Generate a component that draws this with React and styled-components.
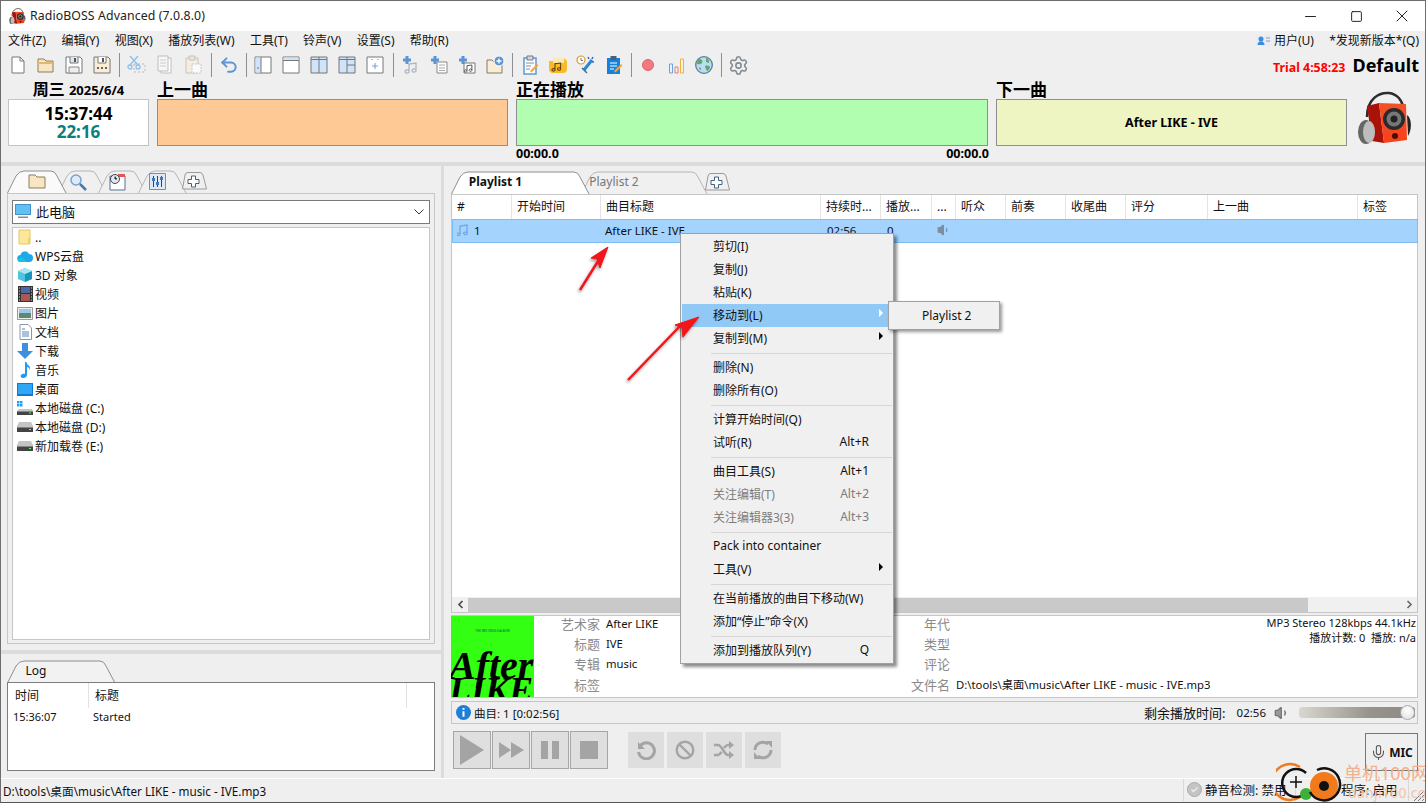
import React from 'react'
import styled, { createGlobalStyle } from 'styled-components'
import { Settings, Undo2, Volume1, Minus, Square, X, Mic } from 'lucide-react'

const Global = createGlobalStyle`
html, body { margin:0; padding:0; background:#efefef; }
body { font-family:"Noto Sans","Noto Sans CJK SC",sans-serif; font-size:12px; color:#111; }
* { box-sizing:border-box; }
`

const Window = styled.div`
position:relative; width:1426px; height:803px; overflow:hidden;
border:1px solid #6e6e6e; border-bottom-color:#555;
display:flex; flex-direction:column; background:#efefef;
`
const TitleBar = styled.div`
height:30px; background:#fff; display:flex; align-items:center; padding-left:8px; flex:none;
`
const TitleText = styled.span`margin:0 0 2px 4px; font-size:12.3px; color:#222; letter-spacing:.1px;`
const WinButtons = styled.div`
margin-left:auto; display:flex; align-items:center; color:#222;
span { width:46px; height:30px; display:flex; align-items:center; justify-content:center; }
`
const MenuBar = styled.div`
height:21px; display:flex; align-items:center; gap:15.3px; padding:0 6px 3px 7px; flex:none;
`
const MenuName = styled.span`white-space:nowrap; ${p => p.$right && 'margin-left:auto;'} display:flex; align-items:center; gap:3px;`
const ToolRow = styled.div`height:28px; display:flex; align-items:center; padding:0 0 2px 3px; flex:none;`
const ToolBtn = styled.div`width:28px; height:26px; display:flex; align-items:center; justify-content:center;`
const ToolSep = styled.div`
width:${p => p.$w || 7}px; height:24px; display:flex; justify-content:center;
&::before { content:""; width:1px; background:#8f8f8f; }
`
const Trial = styled.span`margin-left:auto; color:#f00; font-weight:700; font-size:12.4px; margin-top:5px;`
const DefaultName = styled.span`margin:0 6px 0 7px; font-weight:700; font-size:18px; color:#000; line-height:24px;`
const Header = styled.div`height:82px; display:flex; padding-left:7px; flex:none;`
const Slot = styled.div`width:${p => p.$w}px; margin-right:8px; display:flex; flex-direction:column;`
const SlotTitle = styled.div`
height:19px; font-size:17px; font-weight:700; line-height:19px; color:#000; white-space:nowrap;
${p => p.$center && 'text-align:center; font-size:16px;'}
small { font-size:13px; font-weight:700; }
`
const ClockBox = styled.div`
height:47px; background:#fff; border:1px solid #c4c4c4; display:flex; flex-direction:column; align-items:center; justify-content:center;
`
const ClockMain = styled.div`font-weight:700; font-size:17px; line-height:18px; color:#000;`
const ClockSub = styled.div`font-weight:700; font-size:17px; line-height:18px; color:#0a8080;`
const TrackBox = styled.div`
height:47px; background:${p => p.$bg}; border:1px solid #8f8f8f; display:flex; align-items:center; justify-content:center;
font-weight:700; font-size:12.5px; color:#000;
`
const Times = styled.div`display:flex; justify-content:space-between; font-weight:700; font-size:12.5px; line-height:15px; color:#000; margin-right:-1px;`
const LogoSlot = styled.div`margin:11px 0 0 2px;`
const HSplit = styled.div`height:4px; background:#dcdcdc; flex:none;`
const Main = styled.div`flex:1; display:flex; min-height:0;`
const LeftCol = styled.div`width:440px; display:flex; flex-direction:column; flex:none;`
const VSplit = styled.div`width:3px; background:#dcdcdc; flex:none;`
const RightCol = styled.div`flex:1; padding:5px 7px 0; display:flex; flex-direction:column; min-width:0;`
const LeftTop = styled.div`height:484px; padding:4px 6px 6px; display:flex; flex-direction:column; flex:none;`
const LeftBottom = styled.div`flex:1; padding:6px 6px 7px; display:flex; flex-direction:column; min-height:0;`
const TabStrip = styled.div`display:flex; height:23px; flex:none; position:relative; z-index:1;`
const TabWrap = styled.div`
position:relative; width:${p => p.$w}px; height:${p => p.$small ? 18 : 23}px;
margin-left:${p => p.$over || 0}px; margin-top:${p => p.$small ? 2 : 0}px; z-index:${p => p.$active ? 2 : 1};
display:flex; align-items:center; justify-content:center; padding-right:${p => p.$pad || 0}px;
padding-bottom:${p => p.$text ? 2 : 0}px;
font-weight:${p => p.$bold ? 700 : 400}; color:${p => p.$dim ? '#777' : '#111'};
svg.shape { position:absolute; left:0; top:0; }
> span, > svg:not(.shape) { position:relative; }
`
const TabBody = styled.div`
flex:1; border:1px solid #c6c6c6; padding:6px 4px 3px; display:flex; flex-direction:column; min-height:0;
`
const Combo = styled.div`
height:24px; background:#fff; border:1px solid #7a7a7a; display:flex; align-items:center; padding:0 5px 1px 2px; gap:5px; flex:none; font-size:13px;
`
const ComboArrow = styled.svg`margin-left:auto;`
const FileList = styled.div`
flex:1; margin-top:3px; background:#fff; border:1px solid #c6c6c6;
`
const FileRow = styled.div`height:19px; display:flex; align-items:center; gap:2px; padding:0 0 1px 4px; white-space:nowrap;`
const FileIcon = styled.span`width:16px; height:16px; display:flex; align-items:center; justify-content:center; flex:none;`
const LogBox = styled.div`flex:1; background:#fff; border:1px solid #7d7d7d; margin-top:-1px; position:relative; z-index:1;`
const LogHead = styled.div`display:grid; grid-template-columns:81px 318px 1fr; height:25px;`
const LogHeadCell = styled.div`
display:flex; align-items:center; padding:0 0 2px 7px; font-size:12px;
&:not(:last-child) { border-right:1px solid #e2e2e2; }
&:nth-child(2) { padding-left:6px; }
`
const LogRow = styled.div`display:grid; grid-template-columns:80px 1fr; height:17px; align-items:center; font-size:11px; padding-left:5px;`

const Table = styled.div`
height:${p => p.$h}px; background:#fff; border:1px solid #c6c6c6; position:relative; flex:none; display:flex; flex-direction:column;
`
const HeadRow = styled.div`display:flex; height:24px; flex:none;`
const HeadCell = styled.div`
width:${p => p.$w}px; flex:none; padding:0 0 2px 5px; display:flex; align-items:center; white-space:nowrap; overflow:hidden;
border-right:1px solid #e4e4e4; &:last-child { border-right:none; }
`
const TrackRow = styled.div`
display:flex; height:24px; background:#a4d3fd; border:1px solid #7cbdf6; flex:none; margin:0 -1px 0 0; padding-bottom:2px; align-items:center; font-size:11.5px;
`
const TrackCell = styled.div`width:${p => p.$w}px; flex:none; padding-left:${p => p.$pad ?? 5}px; display:flex; align-items:center; white-space:nowrap;`
const TrackNum = styled.svg`margin-right:5px;`
const TableFill = styled.div`flex:1;`
const HScroll = styled.div`height:15px; display:flex; align-items:center; background:#f0f0f0; flex:none;`
const ScrollArrow = styled.div`width:16px; height:15px; display:flex; align-items:center; justify-content:center; flex:none; ${p => p.$end && 'margin-left:auto;'}`
const ScrollThumb = styled.div`width:${p => p.$w}px; height:14px; background:#c9c9c9;`
const InfoPanel = styled.div`
height:83px; margin-top:2px; background:#fff; border:1px solid #c6c6c6; border-left:none; display:flex; flex:none; overflow:hidden;
`
const Art = styled.div`
width:83px; flex:none; background:#33ff12; position:relative; overflow:hidden; color:#000;
font-family:"Liberation Serif",serif; font-style:italic; font-weight:700; line-height:.7;
`
const ArtTitle = styled.div`position:absolute; left:-2px; top:${p => p.$top}px; font-size:${p => p.$size}px; white-space:nowrap;`
const ArtSmall = styled.div`position:absolute; left:0; right:0; top:13px; text-align:center; font:3px "Noto Sans",sans-serif; color:#156;`
const MetaCol = styled.div`width:${p => p.$w}px; flex:${p => p.$grow ? 1 : 'none'}; margin-top:-3px;`
const MetaRow = styled.div`height:20.4px; display:flex; align-items:center; white-space:nowrap;`
const MetaLabel = styled.span`width:${p => p.$w}px; text-align:right; color:#8a8a8a; font-size:13px; flex:none;`
const MetaValue = styled.span`margin-left:6px; font-size:11.3px;`
const TechInfo = styled.div`width:170px; margin-top:-1px; padding-right:1px; text-align:right; font-size:11px; line-height:15px; white-space:nowrap; flex:none;`
const StatusRow = styled.div`
height:23px; margin-top:3px; border:1px solid #c6c6c6; display:flex; align-items:center; padding:0 2px 0 4px; flex:none; font-size:11.5px;
`
const InfoIcon = styled.svg`margin-right:3px;`
const RemainLabel = styled.span`margin-left:auto; font-size:13px;`
const RemainTime = styled.span`margin:0 8px 0 11px;`
const VolTrack = styled.div`
position:relative; width:116px; height:11px; margin-left:9px; border-radius:3px;
background:linear-gradient(90deg,#dad7d0,#97948c 60%,#8c8a84);
`
const VolKnob = styled.div`
position:absolute; right:0; top:-2px; width:15px; height:15px; border-radius:50%;
background:radial-gradient(circle at 50% 35%,#fff,#ddd); border:1px solid #aaa;
`
const Controls = styled.div`display:flex; align-items:flex-start; margin-top:7px; padding-left:2px; flex:1; position:relative;`
const PlayBtn = styled.div`
width:38px; height:38px; margin-right:1px; background:#dfdfdf; border:1px solid #a6a6a6; display:flex; align-items:center; justify-content:center;
`
const ModeBtn = styled.div`
width:36px; height:36px; margin-right:3px; margin-top:1px; background:#dedede; display:flex; align-items:center; justify-content:center;
`
const Spacer = styled.div`width:${p => p.$w}px; flex:none;`
const MicBtn = styled.div`
margin-left:auto; margin-top:2px; width:53px; height:38px; border:1px solid #777; display:flex; align-items:center; justify-content:center; gap:2px; font-weight:700; font-size:12px;
`
const StatusBar = styled.div`
height:24px; flex:none; display:flex; align-items:center; background:#efefef; border-top:1px solid #fff; position:relative; font-size:11.7px; padding:0 0 1px 2px;
`
const StatusPart = styled.div`
height:22px; display:flex; align-items:center; gap:3px; white-space:nowrap; border-left:1px solid #d8d8d8; padding:0 0 1px ${p => p.$pad ?? 3}px; width:${p => p.$w}px; flex:none; font-size:12.5px;
${p => p.$first && 'margin-left:auto;'}
`
const Grip = styled.svg`position:absolute; right:0; bottom:0;`

const ContextMenu = styled.div`
position:absolute; left:679px; top:232px; width:214px; padding:1px;
background:#f0f0f0; border:1px solid #a0a0a0; box-shadow:3px 3px 3px rgba(0,0,0,.45); z-index:5;
`
const MenuItem = styled.div`
height:23px; display:flex; align-items:center; padding:0 23px 2px 31px; position:relative; font-size:12px; white-space:nowrap;
background:${p => p.$active ? '#90c8f6' : 'transparent'}; color:${p => p.$off ? '#7d7d7d' : '#111'};
`
const Shortcut = styled.span`margin-left:auto;`
const SubArrow = styled.span`
position:absolute; right:9px; top:5px; width:0; height:0; border-left:4px solid ${p => p.$active ? '#fff' : '#000'};
border-top:4px solid transparent; border-bottom:4px solid transparent;
`
const MenuSep = styled.div`height:1px; margin:2.5px 0 2.5px 29px; background:#d6d6d6;`
const SubMenu = styled.div`
position:absolute; left:887px; top:300px; width:112px; height:29px; background:#f0f0f0; border:1px solid #a0a0a0;
box-shadow:2px 2px 3px rgba(0,0,0,.4); display:flex; align-items:center; padding:0 0 1px 33px; z-index:6; font-size:12px;
`
const Arrows = styled.svg`position:absolute; left:570px; top:240px; z-index:7; pointer-events:none;`
const Watermark = styled.div`position:absolute; left:1275px; top:760px; width:150px; height:42px; z-index:8; pointer-events:none;`
const WmMain = styled.div`position:absolute; left:68px; top:0; font-size:18px; line-height:24px; color:#f2b08e; white-space:nowrap;`
const WmSub = styled.div`position:absolute; left:72px; top:24px; font-size:14px; line-height:16px; color:#f4c4aa; white-space:nowrap; letter-spacing:.3px;`

// toolbar drawings
const I = ({ children, s = 20 }) => <svg width={s} height={s} viewBox="0 0 20 20" fill="none">{children}</svg>
const Plus = ({ x, y }) => <path d={`M${x} ${y - 4}v8M${x - 4} ${y}h8`} stroke="#5d94d6" strokeWidth="3" />
const Note = ({ x = 0, y = 0, c = '#9ab' }) => <path transform={`translate(${x} ${y})`} d="M0 8V1l7-1v7M0 8a2 1.6 0 1 1-.1-.2M7 7a2 1.6 0 1 1-.1-.2" stroke={c} strokeWidth="1.3" />

const toolIcons = {
  doc: <I><path d="M4 2h8l4 4v12H4z" fill="#fff" stroke="#777" /><path d="M12 2v4h4" stroke="#777" /></I>,
  open: <I><path d="M2 17V4h6l2 2h7v11z" fill="#f7e6c2" stroke="#8d7d5e" /><path d="M2 8h15" stroke="#e0b870" strokeWidth="2" /></I>,
  save: <I><path d="M2 2h14l2 2v14H2z" fill="#fff" stroke="#777" /><path d="M6 2v6h8V2" fill="#dbe7f2" stroke="#777" /><path d="M5 12h10v6H5z" fill="#eee" stroke="#888" /><path d="M11 3v4" stroke="#555" strokeWidth="2" /></I>,
  saveas: <I><path d="M2 2h14l2 2v14H2z" fill="#f9edd6" stroke="#777" /><path d="M6 2v6h8V2" fill="#fff" stroke="#777" /><path d="M11 3v4" stroke="#555" strokeWidth="2" /><path d="M5 13h2M9 13h2M13 13h2" stroke="#666" strokeWidth="2" /></I>,
  cut: <I><path d="M7 9h11v8H7z" stroke="#b9b9b9" strokeDasharray="2 2" /><path d="M3 1l8 9M11 1L3 10" stroke="#8cc0ec" strokeWidth="1.3" /><circle cx="3" cy="12" r="2" stroke="#8cc0ec" strokeWidth="1.3" /><circle cx="11" cy="12" r="2" stroke="#8cc0ec" strokeWidth="1.3" /></I>,
  copy: <I><path d="M6 3h10v15H6z" fill="#fff" stroke="#bdbdbd" /><path d="M3 1h10v15H3z" fill="#f6f6f6" stroke="#bdbdbd" /><path d="M5 5h6M5 8h6M5 11h6" stroke="#ccc" /></I>,
  paste: <I><path d="M3 3h12v15H3z" fill="#f4ede0" stroke="#c9c4b8" /><path d="M6 1h6v4H6z" fill="#e6e6e6" stroke="#c2c2c2" /><path d="M9 9h9v9H9z" fill="#fafafa" stroke="#c8c8c8" strokeDasharray="2 1" /></I>,
  undo: <Undo2 size={20} color="#5f95d4" strokeWidth={2.4} />,
  l1: <I><path d="M2 2h16v16H2z" fill="#fff" stroke="#777" /><path d="M2.5 2.5H8v15H2.5z" fill="#cfe4f8" /><path d="M8 2v16" stroke="#777" /><path d="M4 13h2" stroke="#777" /></I>,
  l2: <I><path d="M2 2h16v16H2z" fill="#fff" stroke="#777" /><path d="M2.5 2.5h15V5h-15z" fill="#cfe4f8" /><path d="M2 5.500h16" stroke="#777" /></I>,
  l3: <I><path d="M2 2h16v16H2z" fill="#cfe4f8" stroke="#777" /><path d="M10 2v16M2 4.500h16" stroke="#777" /></I>,
  l4: <I><path d="M2 2h16v16H2z" fill="#cfe4f8" stroke="#777" /><path d="M10 2v16M10 10h8M2 4.500h16" stroke="#777" /></I>,
  l5: <I><path d="M2 2h16v16H2z" fill="#fff" stroke="#777" /><path d="M10 8v6M7 11h6" stroke="#6fa1d6" /><path d="M6 4.500h2M12 4.500h2" stroke="#9cc4ea" /></I>,
  addNote: <I><Plus x={6} y={5} /><g transform="translate(8 8)"><Note c="#aab6c2" /></g></I>,
  addList: <I><Plus x={6} y={5} /><path d="M8 7h10v11H8z" fill="#fff" stroke="#888" /><path d="M10 10h6M10 13h6M10 15.500h6" stroke="#aaa" /></I>,
  addMusic: <I><Plus x={6} y={5} /><path d="M7 8h11v10H7z" fill="#fff" stroke="#777" /><g transform="translate(10 10) scale(.7)"><Note c="#444" /></g></I>,
  addFolder: <I><path d="M2 18V5h5l2 2h8v11z" fill="#f9edd6" stroke="#857a66" /><circle cx="14" cy="6" r="5" fill="#5d94d6" stroke="#fff" /><path d="M14 3.500v5M11.500 6h5" stroke="#fff" strokeWidth="1.3" /></I>,
  clipA: <I><path d="M4 3h12v16H4z" fill="#fff" stroke="#5d9bd8" strokeWidth="1.5" /><path d="M7 1h6v4H7z" fill="#cfd8e0" stroke="#778" /><path d="M6 8h8M6 11h5M6 14h4" stroke="#889" /><path d="M10 16l7-7 1.500 1.500-7 7z" fill="#f4a732" /></I>,
  folderMusic: <I><path d="M1 6h7l2-3h6l3 3v8c0 3-2 4-4 4H5c-2 0-4-1-4-4z" fill="#fbb928" /><path d="M5 3h11v5H5z" fill="#fde9b0" /><g transform="translate(7 8) scale(.8)"><Note c="#5a4210" /></g></I>,
  tools: <I><circle cx="5" cy="5" r="4" fill="#fff" stroke="#d89b30" strokeWidth="1.2" /><path d="M5 3v2.500h2" stroke="#777" /><path d="M8 15L16 5" stroke="#2c84d6" strokeWidth="3" /><path d="M6 13l5 5M12 2l1 2M17 2l-1 2M18 7h-2" stroke="#3a6fa8" strokeWidth="1.5" /></I>,
  clipB: <I><path d="M3 3h13v16H3z" fill="#1481dc" /><path d="M6.500 1h6v4h-6z" fill="#45627a" /><path d="M6 8h7M6 11h7M6 14h4" stroke="#fff" /><path d="M10 16l7-7 1.500 1.500-7 7z" fill="#f4a732" /></I>,
  rec: <I><circle cx="10" cy="10" r="5.500" fill="#f3797e" stroke="#d9676c" /></I>,
  bars: <I><path d="M3.500 9h3v9h-3z" fill="#e9f3fc" stroke="#6fa1d6" /><path d="M9 12h3v6H9z" fill="#fbeeee" stroke="#dd7a7e" /><path d="M14.500 4h3v14h-3z" fill="#fdf3da" stroke="#eeb13e" /></I>,
  globe: <I><circle cx="10" cy="10" r="8.300" fill="#bcdcf2" stroke="#557d9c" strokeWidth="1.300" /><path d="M5 4c3 0 4 2 3 4S4 9 3 9c0-2 .500-4 2-5zM12 3c2 0 4 3 3 5l-3-1zM11 11c2-1 5 0 5 1 0 2-2 4-3 4-1-2-2-3-2-5zM5 12l2 1v2c-1 0-2-1-2-3z" fill="#62a86d" /></I>,
  gear: <Settings size={21} color="#848a93" strokeWidth={1.8} />,
}

const toolbar = [
  ['doc', 'open', 'save', 'saveas'], 7, ['cut', 'copy', 'paste'], 8, ['undo'], 6,
  ['l1', 'l2', 'l3', 'l4', 'l5'], 8, ['addNote', 'addList', 'addMusic', 'addFolder'], 7,
  ['clipA', 'folderMusic', 'tools', 'clipB'], 6, ['rec', 'bars', 'globe'], 6, ['gear'],
]

const TabShape = ({ w, h = 23, active, fill }) => (
  <svg className="shape" width={w} height={h}>
    <path d={`M0.5 ${h} L9 6 Q12 1 17 1 H${w - 16} Q${w - 12} 1 ${w - 10} 6 L${w - 1} ${h}`} fill={fill || (active ? '#fafafa' : '#f0f0f0')} stroke={active ? '#8e8e8e' : '#b5b5b5'} />
  </svg>
)
const PlusTab = ({ over }) => (
  <TabWrap $w={25} $small $over={over} $pad={3}>
    <svg className="shape" width={25} height={18}>
      <path d="M.5 17 L3 3 Q3.500 .5 6 .5 H18 Q20 .5 21 3 L24.500 17 Z" fill="#f0f0f0" stroke="#9a9a9a" />
    </svg>
    <svg width="13" height="13" viewBox="0 0 13 13"><path d="M4.500 1h4v3.500H12v4H8.500V12h-4V8.500H1v-4h3.500z" fill="#fff" stroke="#44607e" /></svg>
  </TabWrap>
)

const fileIcons = {
  folder: <svg width="14" height="16" viewBox="0 0 14 16"><path d="M1 1h11v14H1z" fill="#fde79a" stroke="#e8c766" /><path d="M10 9h2v6h-2z" fill="#f0cf70" /></svg>,
  cloud: <svg width="16" height="12" viewBox="0 0 16 12"><path d="M4 12a3.500 3.500 0 0 1-.500-7A4.500 4.500 0 0 1 12 4a4 4 0 0 1 0 8z" fill="#1ea7ea" /><path d="M1 9c3-3 6-1 9 3H4c-2 0-3-1-3-3z" fill="#12c6d8" /></svg>,
  cube: <svg width="16" height="16" viewBox="0 0 16 16"><path d="M8 1l7 3v8l-7 3-7-3V4z" fill="#4ec4e0" /><path d="M8 7v8l7-3V4z" fill="#1b95bb" /><path d="M1 4l7 3 7-3-7-3z" fill="#a6e6f2" /></svg>,
  film: <svg width="15" height="16" viewBox="0 0 15 16"><path d="M0 0h15v16H0z" fill="#333" /><path d="M3 1h9v6H3z" fill="#4a68ac" /><path d="M3 8h9v7H3z" fill="#a75a52" /><path d="M1 2h1M1 5h1M1 8h1M1 11h1M1 14h1M13 2h1M13 5h1M13 8h1M13 11h1M13 14h1" stroke="#ddd" /></svg>,
  pic: <svg width="16" height="13" viewBox="0 0 16 13"><path d="M.5.5h15v12H.5z" fill="#eee" stroke="#999" /><path d="M2 2h12v4H2z" fill="#9fc7e6" /><path d="M2 6h12v5H2z" fill="#5d8a6d" /></svg>,
  text: <svg width="13" height="16" viewBox="0 0 13 16"><path d="M1 .5h8l3.500 3.500v11.500H1z" fill="#fff" stroke="#8a98a8" /><path d="M3 5h3M3 8h7M3 10h7M3 12h7" stroke="#4f86be" /></svg>,
  down: <svg width="16" height="16" viewBox="0 0 16 16"><path d="M5 0h6v8h5l-8 8-8-8h5z" fill="#3f8fe0" /></svg>,
  music: <svg width="13" height="16" viewBox="0 0 13 16"><path d="M6 0h1.500c0 3 4.500 3.500 3.500 8-.500-2-2-3-3-3v8c0 2-2 3-4 3s-3-2-2-3 3-1.500 4-1z" fill="#1d9bf0" /></svg>,
  desk: <svg width="16" height="13" viewBox="0 0 16 13"><path d="M0 0h16v13H0z" fill="#0d78d6" /><path d="M1 1h14v10H1z" fill="#31a6f5" /></svg>,
  sys: <svg width="16" height="14" viewBox="0 0 16 14"><path d="M0 0h2.500v2.500H0zM3 0h2.500v2.500H3zM0 3h2.500v2.500H0zM3 3h2.500v2.500H3z" fill="#1da1f2" /><path d="M2 8h13l1 2v4H0v-4z" fill="#c4c4c4" /><path d="M0 10.500h16V14H0z" fill="#444" /><path d="M12 11.500h2v1h-2z" fill="#5f5" /></svg>,
  disk: <svg width="16" height="10" viewBox="0 0 16 10"><path d="M2 0h12l2 4v6H0V4z" fill="#c4c4c4" /><path d="M0 5.500h16V10H0z" fill="#444" /><path d="M12 7h2v1h-2z" fill="#5f5" /></svg>,
}

const files = [
  ['folder', '..'], ['cloud', 'WPS云盘'], ['cube', '3D 对象'], ['film', '视频'], ['pic', '图片'], ['text', '文档'],
  ['down', '下载'], ['music', '音乐'], ['desk', '桌面'], ['sys', '本地磁盘 (C:)'], ['disk', '本地磁盘 (D:)'], ['disk', '新加载卷 (E:)'],
]

const columns = [
  ['#', 60], ['开始时间', 89], ['曲目标题', 220], ['持续时...', 60], ['播放...', 51], ['...', 24], ['听众', 50],
  ['前奏', 60], ['收尾曲', 60], ['评分', 82], ['上一曲', 150], ['标签', 59],
]

const menu = [
  { t: '剪切(I)' }, { t: '复制(J)' }, { t: '粘贴(K)' }, { t: '移动到(L)', sub: true, active: true }, { t: '复制到(M)', sub: true }, null,
  { t: '删除(N)' }, { t: '删除所有(O)' }, null,
  { t: '计算开始时间(Q)' }, { t: '试听(R)', k: 'Alt+R' }, null,
  { t: '曲目工具(S)', k: 'Alt+1' }, { t: '关注编辑(T)', k: 'Alt+2', off: true }, { t: '关注编辑器3(3)', k: 'Alt+3', off: true }, null,
  { t: 'Pack into container' }, { t: '工具(V)', sub: true }, null,
  { t: '在当前播放的曲目下移动(W)' }, { t: '添加“停止”命令(X)' }, null,
  { t: '添加到播放队列(Y)', k: 'Q' },
]

const G = '#a4a4a4'
const Logo = ({ s = 56 }) => (
  <svg width={s} height={s} viewBox="0 0 56 56">
    <defs>
      <linearGradient id="boxFront" x1="0" y1="0" x2="0" y2="1"><stop offset="0" stopColor="#f0522a" /><stop offset="1" stopColor="#f8401a" /></linearGradient>
    </defs>
    <path d="M10 26C10 8 22 1 32 2c8 1 13 7 14 14" fill="none" stroke="#2c2c2c" strokeWidth="2.500" />
    <path d="M10 15L22 12 27 52 15 50z" fill="#a81208" />
    <path d="M22 12L49 13 50 49 27 52z" fill="url(#boxFront)" />
    <circle cx="37" cy="28" r="11" fill="#2a2a2a" /><circle cx="37" cy="28" r="7.500" fill="#777" /><circle cx="37" cy="28" r="3.500" fill="#222" />
    <circle cx="38" cy="45" r="3" fill="#4a0d05" />
    <ellipse cx="9" cy="41" rx="8" ry="12" fill="#666" /><ellipse cx="12" cy="41" rx="6" ry="11" fill="#bdbdbd" />
    <path d="M50 24c5 3 5 15 1 21z" fill="#222" />
  </svg>
)

const App = () => (
  <>
    <Global />
    <Window>
      <TitleBar>
        <Logo s={17} />
        <TitleText>RadioBOSS Advanced (7.0.8.0)</TitleText>
        <WinButtons>
          <span><Minus size={17} strokeWidth={1.4} /></span>
          <span><Square size={13} strokeWidth={1.8} /></span>
          <span><X size={20} strokeWidth={1.2} /></span>
        </WinButtons>
      </TitleBar>
      <MenuBar>
        {['文件(Z)', '编辑(Y)', '视图(X)', '播放列表(W)', '工具(T)', '铃声(V)', '设置(S)', '帮助(R)'].map(m => <MenuName key={m}>{m}</MenuName>)}
        <MenuName $right>
          <svg width="15" height="11" viewBox="0 0 15 11"><path d="M0 0h15v11H0z" fill="#e6edf5" /><circle cx="5" cy="4" r="2.500" fill="#3b8ddb" /><path d="M1.500 10c0-5 7-5 7 0z" fill="#3b8ddb" /><path d="M10 3h4M10 6h4" stroke="#99a" /></svg>
          用户(U)
        </MenuName>
        <MenuName>*发现新版本*(Q)</MenuName>
      </MenuBar>
      <ToolRow>
        {toolbar.map((g, i) => typeof g === 'number'
          ? <ToolSep key={i} $w={g} />
          : g.map(n => <ToolBtn key={n}>{toolIcons[n]}</ToolBtn>))}
        <Trial>Trial 4:58:23</Trial>
        <DefaultName>Default</DefaultName>
      </ToolRow>
      <Header>
        <Slot $w={141}>
          <SlotTitle $center>周三 <small>2025/6/4</small></SlotTitle>
          <ClockBox>
            <ClockMain>15:37:44</ClockMain>
            <ClockSub>22:16</ClockSub>
          </ClockBox>
        </Slot>
        <Slot $w={351}>
          <SlotTitle>上一曲</SlotTitle>
          <TrackBox $bg="#fec994" />
        </Slot>
        <Slot $w={472}>
          <SlotTitle>正在播放</SlotTitle>
          <TrackBox $bg="#b1feb1" />
          <Times><span>00:00.0</span><span>00:00.0</span></Times>
        </Slot>
        <Slot $w={351}>
          <SlotTitle>下一曲</SlotTitle>
          <TrackBox $bg="#eef4c2">After LIKE - IVE</TrackBox>
        </Slot>
        <LogoSlot><Logo /></LogoSlot>
      </Header>
      <HSplit />
      <Main>
        <LeftCol>
          <LeftTop>
            <TabStrip>
              <TabWrap $w={60} $active>
                <TabShape w={60} active />
                <svg width="18" height="15" viewBox="0 0 18 15"><path d="M1 14V1h6l2 2h8v11z" fill="#f7e6c2" stroke="#8d7d5e" /></svg>
              </TabWrap>
              {[
                <svg key="s" width="18" height="18" viewBox="0 0 18 18"><circle cx="7" cy="7" r="5" fill="#dcecf9" stroke="#7aa3c9" strokeWidth="1.500" /><path d="M11 11l6 6" stroke="#4a78a8" strokeWidth="2.500" /></svg>,
                <svg key="c" width="17" height="18" viewBox="0 0 17 18"><path d="M1 3h15v14H1z" fill="#fff" stroke="#54708c" /><path d="M9 1h7v3H9z" fill="#e25555" /><circle cx="6" cy="6" r="4.500" fill="#dfe9f2" stroke="#445" /><path d="M6 3.500V6h2" stroke="#333" /></svg>,
                <svg key="m" width="17" height="17" viewBox="0 0 17 17"><path d="M.5.5h16v16H.5z" fill="#dfe9f5" stroke="#7a8fa6" /><path d="M4.500 3v11M8.500 3v11M12.500 3v11" stroke="#345" /><path d="M3 5h3v3H3zM7 9h3v3H7zM11 4h3v3h-3z" fill="#3f78c0" /></svg>,
              ].map(ic => (
                <TabWrap $w={49} $over={-9} $pad={10} key={ic.key}><TabShape w={49} />{ic}</TabWrap>
              ))}
              <PlusTab over={-5} />
            </TabStrip>
            <TabBody>
              <Combo>
                <svg width="16" height="15" viewBox="0 0 16 15"><path d="M0 0h16v11H0z" fill="#4a90c8" /><path d="M1 1h14v9H1z" fill="#5ec0f4" /><path d="M3 12.500h10v1.500H3z" fill="#889" /></svg>
                此电脑
                <ComboArrow width="10" height="6" viewBox="0 0 10 6"><path d="M.5.5L5 5 9.500.5" fill="none" stroke="#333" /></ComboArrow>
              </Combo>
              <FileList>
                {files.map(([ic, name]) => (
                  <FileRow key={name}><FileIcon>{fileIcons[ic]}</FileIcon>{name}</FileRow>
                ))}
              </FileList>
            </TabBody>
          </LeftTop>
          <HSplit />
          <LeftBottom>
            <TabStrip>
              <TabWrap $w={109} $active $pad={51} $text><TabShape w={109} active fill="#f2f2f2" /><span>Log</span></TabWrap>
            </TabStrip>
            <LogBox>
              <LogHead><LogHeadCell>时间</LogHeadCell><LogHeadCell>标题</LogHeadCell><LogHeadCell /></LogHead>
              <LogRow><span>15:36:07</span><span>Started</span></LogRow>
            </LogBox>
          </LeftBottom>
        </LeftCol>
        <VSplit />
        <RightCol>
          <TabStrip>
            <TabWrap $w={139} $active $bold $pad={50} $text><TabShape w={139} active fill="#fff" /><span>Playlist 1</span></TabWrap>
            <TabWrap $w={127} $over={-9} $dim $pad={61} $text><TabShape w={127} /><span>Playlist 2</span></TabWrap>
            <PlusTab over={-3} />
          </TabStrip>
          <Table $h={419}>
            <HeadRow>
              {columns.map(([t, w]) => <HeadCell key={t} $w={w}>{t}</HeadCell>)}
            </HeadRow>
            <TrackRow>
              <TrackCell $w={60} $pad={4}>
                <TrackNum width="12" height="12" viewBox="0 0 12 12"><path d="M3 10V2l7-1v8M3 10a1.700 1.300 0 1 1-.1-.2M10 9a1.700 1.300 0 1 1-.1-.2" fill="none" stroke="#6fa8e8" strokeWidth="1.300" /></TrackNum>
                1
              </TrackCell>
              <TrackCell $w={89} />
              <TrackCell $w={220} $pad={3}>After LIKE - IVE</TrackCell>
              <TrackCell $w={60}>02:56</TrackCell>
              <TrackCell $w={51}>0</TrackCell>
              <TrackCell $w={24} $pad={4}><Volume1 size={14} color="#7a8ea3" fill="#7a8ea3" /></TrackCell>
            </TrackRow>
            <TableFill />
            <HScroll>
              <ScrollArrow><svg width="7" height="9" viewBox="0 0 7 9"><path d="M5.500 1L2 4.500 5.500 8" fill="none" stroke="#444" strokeWidth="1.600" /></svg></ScrollArrow>
              <ScrollThumb $w={840} />
              <ScrollArrow $end><svg width="7" height="9" viewBox="0 0 7 9"><path d="M1.500 1L5 4.500 1.500 8" fill="none" stroke="#666" strokeWidth="1.600" /></svg></ScrollArrow>
            </HScroll>
          </Table>
          <InfoPanel>
            <Art>
              <ArtSmall>THE 3RD SINGLE ALBUM</ArtSmall>
              <ArtTitle $top={36} $size={40}>After</ArtTitle>
              <ArtTitle $top={62} $size={36}>LIKE,</ArtTitle>
            </Art>
            <MetaCol $w={350}>
              {[['艺术家', 'After LIKE'], ['标题', 'IVE'], ['专辑', 'music'], ['标签', '']].map(([l, v]) => (
                <MetaRow key={l}><MetaLabel $w={66}>{l}</MetaLabel><MetaValue>{v}</MetaValue></MetaRow>
              ))}
            </MetaCol>
            <MetaCol $grow>
              {[['年代', ''], ['类型', ''], ['评论', ''], ['文件名', 'D:\\tools\\桌面\\music\\After LIKE - music - IVE.mp3']].map(([l, v]) => (
                <MetaRow key={l}><MetaLabel $w={66}>{l}</MetaLabel><MetaValue>{v}</MetaValue></MetaRow>
              ))}
            </MetaCol>
            <TechInfo>MP3 Stereo 128kbps 44.1kHz<br />播放计数: 0&nbsp; 播放: n/a</TechInfo>
          </InfoPanel>
          <StatusRow>
            <InfoIcon width="15" height="15" viewBox="0 0 15 15"><circle cx="7.500" cy="7.500" r="7.500" fill="#1c7fd8" /><path d="M7.500 3v1.800M7.500 6.300v5.500" stroke="#fff" strokeWidth="2" /></InfoIcon>
            曲目: 1 [0:02:56]
            <RemainLabel>剩余播放时间:</RemainLabel>
            <RemainTime>02:56</RemainTime>
            <Volume1 size={16} color="#777" fill="#999" />
            <VolTrack><VolKnob /></VolTrack>
          </StatusRow>
          <Controls>
            <PlayBtn><svg width="26" height="30" viewBox="0 0 26 30"><path d="M1 0l24 15L1 30z" fill={G} /></svg></PlayBtn>
            <PlayBtn><svg width="25" height="16" viewBox="0 0 25 16"><path d="M0 0l12 8L0 16zM12 0l13 8-13 8z" fill={G} /></svg></PlayBtn>
            <PlayBtn><svg width="18" height="18" viewBox="0 0 18 18"><path d="M0 0h7v18H0zM11 0h7v18h-7z" fill={G} /></svg></PlayBtn>
            <PlayBtn><svg width="18" height="18" viewBox="0 0 18 18"><path d="M0 0h18v18H0z" fill={G} /></svg></PlayBtn>
            <Spacer $w={19} />
            <ModeBtn>
              <svg width="20" height="20" viewBox="0 0 20 20" fill="none" stroke={G} strokeWidth="3"><path d="M4 6a8 8 0 1 1-1.500 6" /><path d="M2 2v7h7z" fill={G} stroke="none" /></svg>
            </ModeBtn>
            <ModeBtn>
              <svg width="20" height="20" viewBox="0 0 20 20" fill="none" stroke={G} strokeWidth="2.400"><circle cx="10" cy="10" r="8.300" /><path d="M4.500 4.500l11 11" /></svg>
            </ModeBtn>
            <ModeBtn>
              <svg width="20" height="18" viewBox="0 0 20 18" fill="none" stroke={G} strokeWidth="2.600"><path d="M0 4h4c4 0 6 10 10 10h2M0 14h4c1.500 0 2.500-1.500 3.500-3M10 7c1-1.500 2.500-3 4-3h2" /><path d="M15 0l5 4-5 4zM15 10l5 4-5 4z" fill={G} stroke="none" /></svg>
            </ModeBtn>
            <ModeBtn>
              <svg width="20" height="20" viewBox="0 0 20 20" fill="none" stroke={G} strokeWidth="3"><path d="M2 10a8 8 0 0 1 13-6M18 10a8 8 0 0 1-13 6" /><path d="M13 1l6 0 0 7zM7 19l-6 0 0-7z" fill={G} stroke="none" /></svg>
            </ModeBtn>
            <MicBtn><Mic size={17} color="#555" strokeWidth={1.500} />MIC</MicBtn>
          </Controls>
        </RightCol>
      </Main>
      <StatusBar>
        D:\tools\桌面\music\After LIKE - music - IVE.mp3
        <StatusPart $first $w={112}>
          <svg width="15" height="15" viewBox="0 0 15 15"><circle cx="7.500" cy="7.500" r="7" fill="#c4c4c4" stroke="#aaa" /><path d="M4.500 7.500l2 2 4-4" stroke="#eee" strokeWidth="1.300" fill="none" /></svg>
          静音检测: 禁用
        </StatusPart>
        <StatusPart $w={113} $pad={45}>程序: 启用</StatusPart>
        <StatusPart $w={17} />
        <Grip width="14" height="14" viewBox="0 0 14 14"><path d="M13 3L3 13M13 7L7 13M13 11L11 13" stroke="#777" /></Grip>
      </StatusBar>

      <ContextMenu>
        {menu.map((m, i) => m === null
          ? <MenuSep key={i} />
          : (
            <MenuItem key={m.t} $active={m.active} $off={m.off}>
              {m.t}
              {m.k && <Shortcut>{m.k}</Shortcut>}
              {m.sub && <SubArrow $active={m.active} />}
            </MenuItem>
          ))}
      </ContextMenu>
      <SubMenu>Playlist 2</SubMenu>
      <Arrows width="140" height="150" viewBox="0 0 140 150">
        <defs>
          <filter id="sh" x="-30%" y="-30%" width="170%" height="170%"><feDropShadow dx="-1" dy="2" stdDeviation="1.500" floodColor="#000" floodOpacity=".4" /></filter>
        </defs>
        <g fill="#f0141a" stroke="#f0141a" strokeLinejoin="round" filter="url(#sh)">
          <path d="M9 49L29 17" strokeWidth="2.500" />
          <path d="M37 6L20 17L26 18L29 27z" strokeWidth="1" />
          <path d="M57 139L110 84" strokeWidth="2.500" />
          <path d="M128 76L104 84L111 87L112 96z" strokeWidth="1" />
        </g>
      </Arrows>
      <Watermark>
        <WmMain>单机100网</WmMain>
        <WmSub>danji100.com</WmSub>
        <svg width="70" height="42" viewBox="0 0 70 42">
          <path d="M24 6A18 18 0 1 0 24 36" fill="none" stroke="#f07a1c" strokeWidth="2.500" />
          <path d="M30 12A14 14 0 1 0 30 32" fill="none" stroke="#111" strokeWidth="2.500" />
          <path d="M20 15v12M14 21h12" stroke="#111" strokeWidth="1.500" />
          <circle cx="30" cy="33" r="6" fill="#3fae3a" />
          <circle cx="48" cy="25" r="14" fill="#f07a1c" />
          <path d="M41 9a16 16 0 1 1-7 22" fill="none" stroke="#111" strokeWidth="2.500" />
          <circle cx="48" cy="25" r="5" fill="#111" />
        </svg>
      </Watermark>
    </Window>
  </>
)

export default App
